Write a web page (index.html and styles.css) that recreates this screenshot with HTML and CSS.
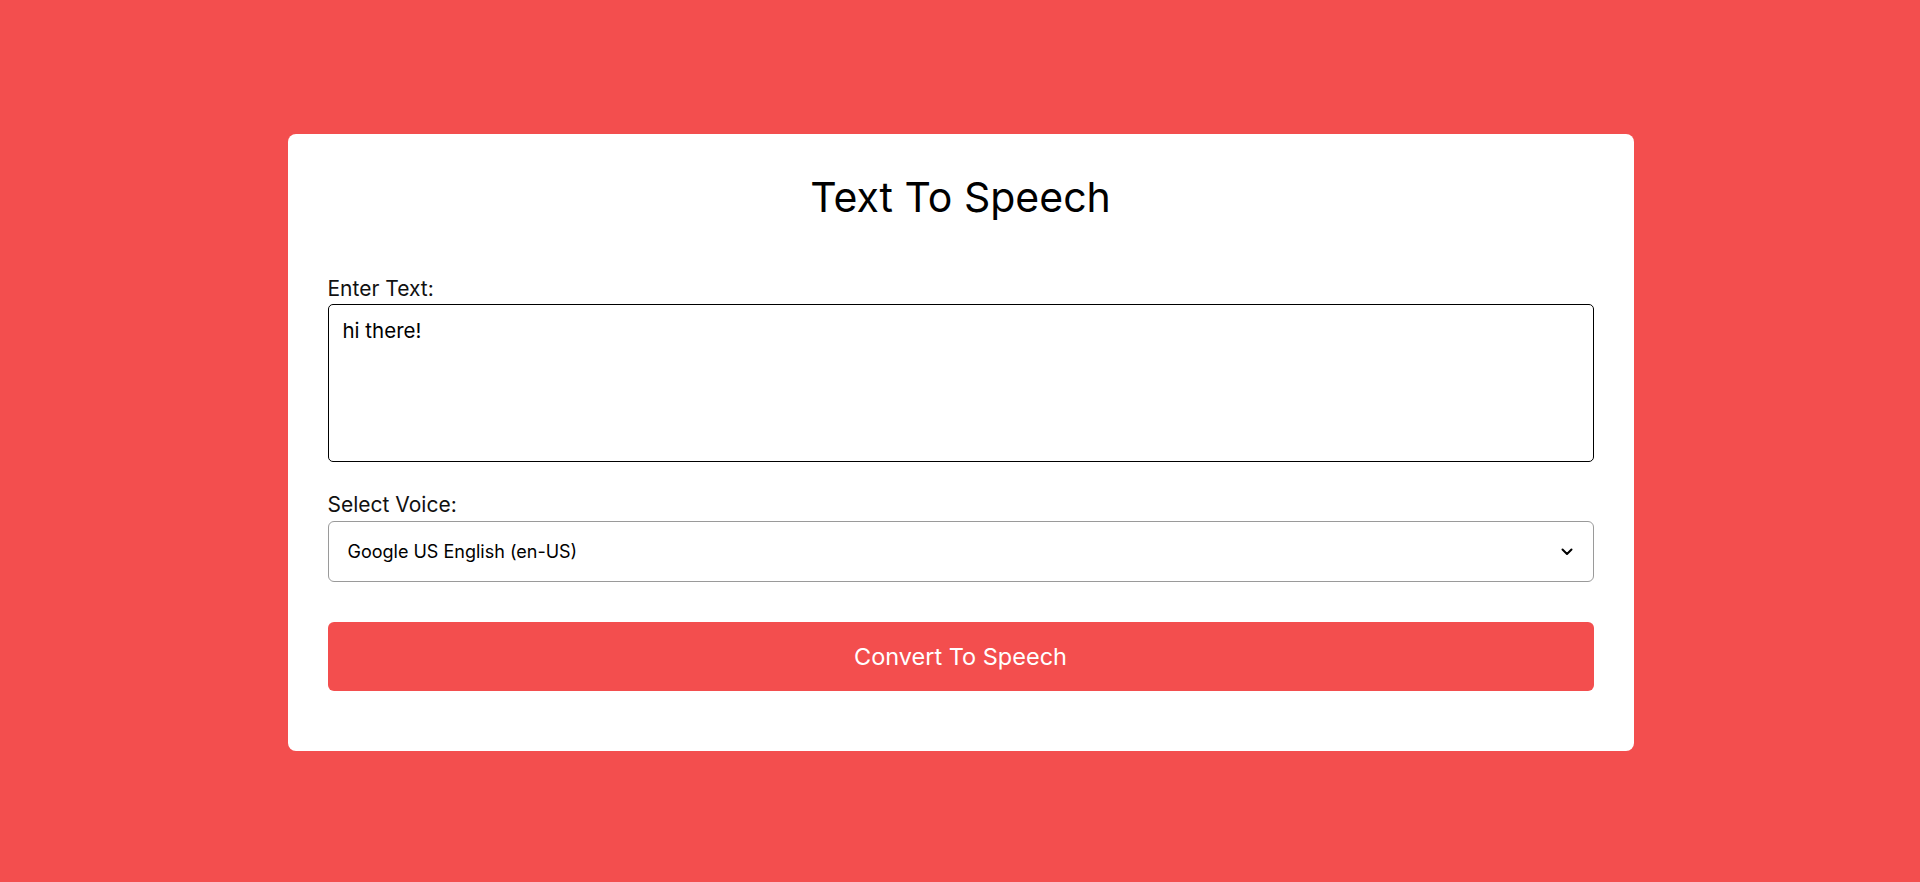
FILE: index.html
```html
<!DOCTYPE html>
<html lang="en">
<head>
<meta charset="UTF-8">
<title>Text To Speech</title>
<link rel="stylesheet" href="styles.css">
</head>
<body>
  <main class="card">
    <h1 class="title">Text To Speech</h1>
    <label class="label label-first" for="text">Enter Text:</label>
    <textarea id="text" class="textarea">hi there!</textarea>
    <label class="label label-second" for="voice">Select Voice:</label>
    <div class="select-wrap">
      <select id="voice" class="select">
        <option>Google US English (en-US)</option>
      </select>
      <svg class="chevron" width="12" height="8" viewBox="0 0 12 8" aria-hidden="true">
        <path d="M1.5 1.5 L6 6 L10.5 1.5" fill="none" stroke="#000" stroke-width="2" stroke-linecap="round" stroke-linejoin="round"/>
      </svg>
    </div>
    <button class="button" type="button">Convert To Speech</button>
  </main>
</body>
</html>
```

FILE: styles.css
```css
* {
  box-sizing: border-box;
}

html, body {
  margin: 0;
  padding: 0;
}

body {
  min-height: 100vh;
  background: #f34e4e;
  display: flex;
  align-items: center;
  justify-content: center;
  padding-top: 2px;
  font-family: Inter, "Noto Sans", "Liberation Sans", sans-serif;
  color: #000;
}

.card {
  width: 1346px;
  margin-left: 1px;
  background: #fff;
  border-radius: 8px;
  padding: 40px 40px 60px;
  display: flex;
  flex-direction: column;
}

.title {
  margin: 0;
  font-size: 41px;
  line-height: 46px;
  font-weight: 400;
  text-align: center;
  color: #000;
}

.label {
  display: block;
  font-size: 21px;
  line-height: 24px;
  color: #111;
  margin-bottom: 4px;
}

.label-first {
  margin-top: 57px;
  margin-bottom: 3px;
}

.label-second {
  margin-top: 31px;
}

.textarea {
  display: block;
  width: 100%;
  height: 158px;
  border: 1px solid #000;
  border-radius: 5px;
  padding: 14px;
  font-family: inherit;
  font-size: 20.5px;
  line-height: 24px;
  color: #000;
  resize: none;
  outline: none;
}

.select-wrap {
  position: relative;
}

.select {
  display: block;
  width: 100%;
  height: 61px;
  border: 1px solid #9a9a9a;
  border-radius: 6px;
  padding: 0 50px 0 19px;
  font-family: inherit;
  font-size: 18px;
  color: #000;
  background: #fff;
  -webkit-appearance: none;
  appearance: none;
  outline: none;
}

.chevron {
  position: absolute;
  right: 21px;
  top: 27px;
  pointer-events: none;
}

.button {
  margin-top: 40px;
  height: 69px;
  width: 100%;
  border: none;
  border-radius: 6px;
  background: #f34e4e;
  color: #fff;
  font-family: inherit;
  font-size: 23.5px;
  cursor: pointer;
}
```
